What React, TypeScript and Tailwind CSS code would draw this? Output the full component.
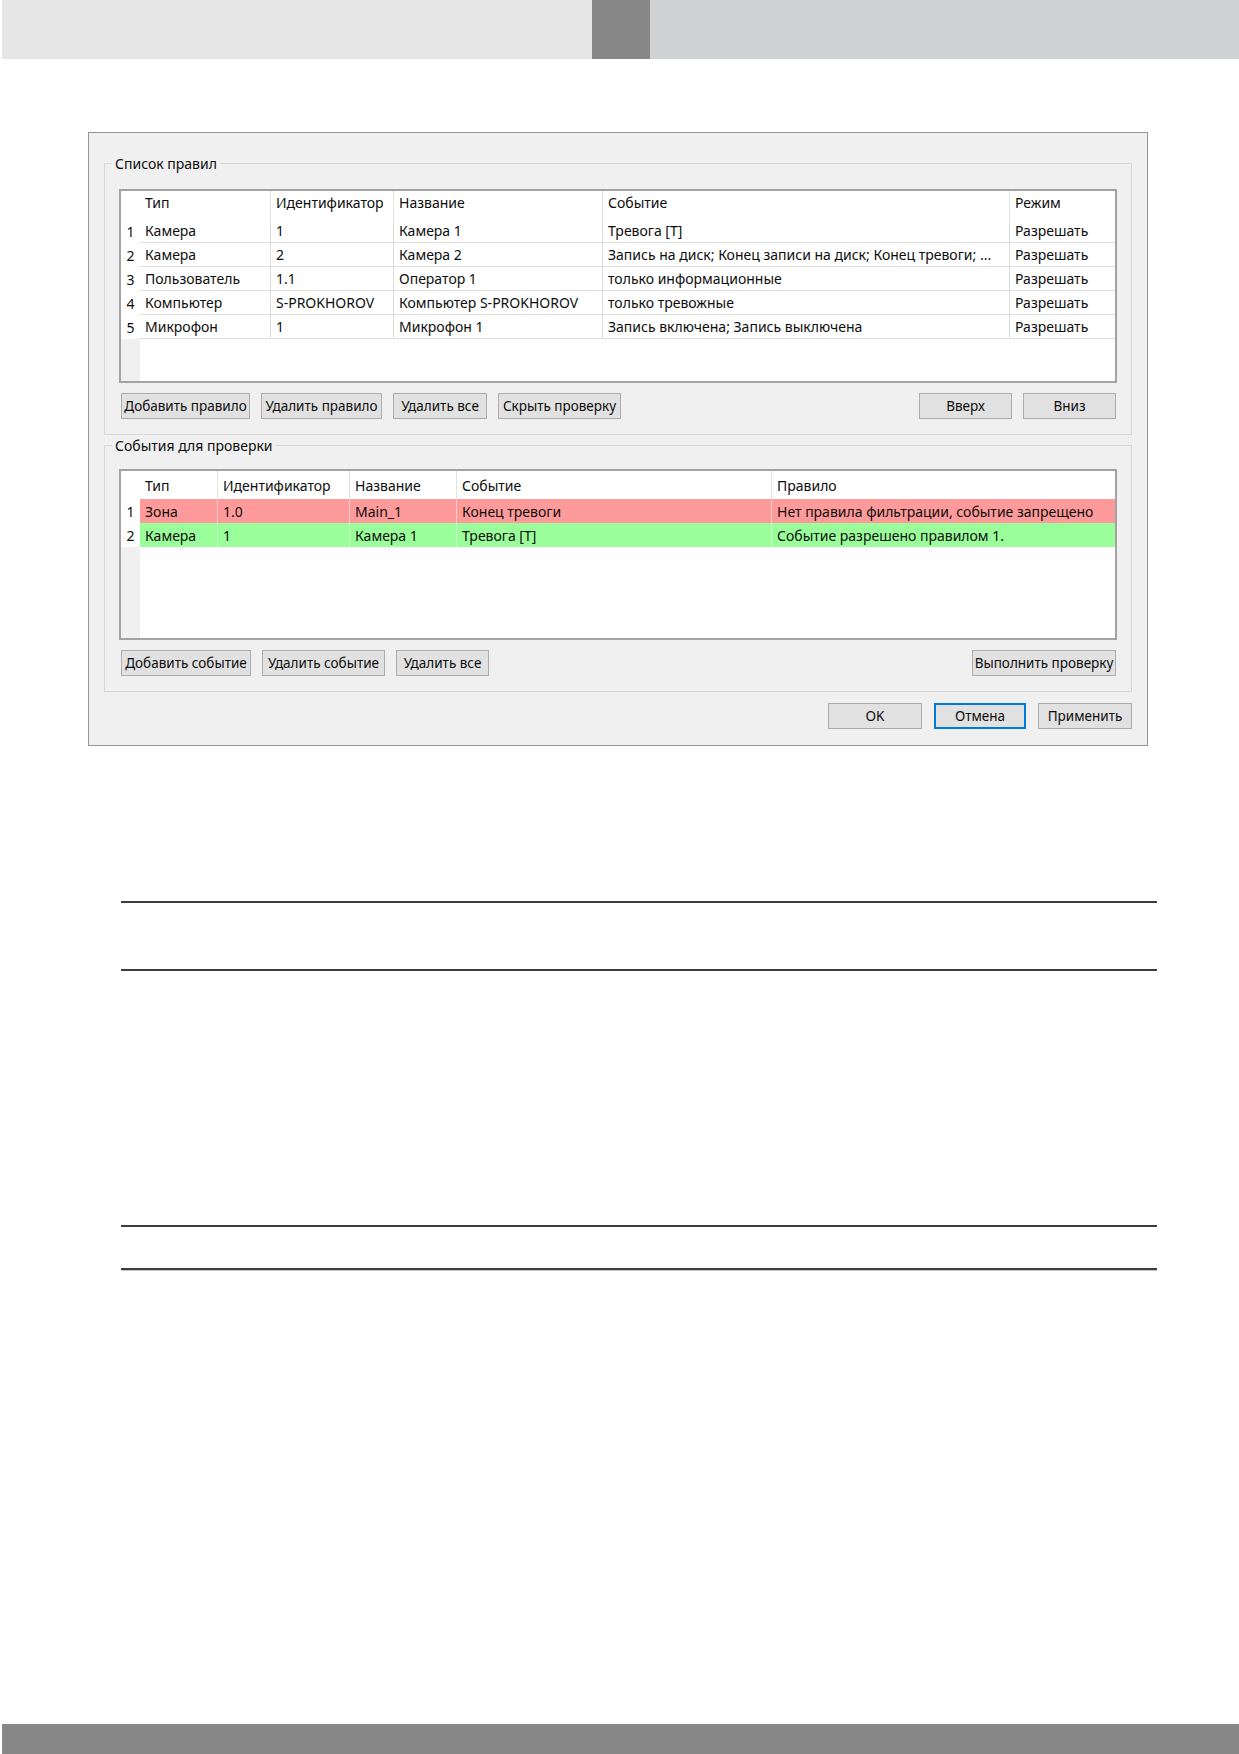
import React from "react";

type Tone = "red" | "green";
type Row = { cells: string[]; tone?: Tone };

// column templates for both grids (row-number column first)
const RULE_COLS = "grid-cols-[19px_130px_123px_209px_407px_1fr]";
const CHECK_COLS = "grid-cols-[19px_77px_132px_107px_315px_1fr]";

const rules: Row[] = [
  { cells: ["Камера", "1", "Камера 1", "Тревога [T]", "Разрешать"] },
  {
    cells: [
      "Камера",
      "2",
      "Камера 2",
      "Запись на диск; Конец записи на диск; Конец тревоги; ...",
      "Разрешать",
    ],
  },
  { cells: ["Пользователь", "1.1", "Оператор 1", "только информационные", "Разрешать"] },
  { cells: ["Компьютер", "S-PROKHOROV", "Компьютер S-PROKHOROV", "только тревожные", "Разрешать"] },
  { cells: ["Микрофон", "1", "Микрофон 1", "Запись включена; Запись выключена", "Разрешать"] },
];

const checks: Row[] = [
  {
    tone: "red",
    cells: ["Зона", "1.0", "Main_1", "Конец тревоги", "Нет правила фильтрации, событие запрещено"],
  },
  {
    tone: "green",
    cells: ["Камера", "1", "Камера 1", "Тревога [T]", "Событие разрешено правилом 1."],
  },
];

function DataGrid({
  cols,
  head,
  rows,
  height,
  headPad = "",
}: {
  cols: string;
  head: string[];
  rows: Row[];
  height: string;
  headPad?: string;
}) {
  return (
    <div className={`flex flex-col border-2 border-[#a3a3a3] bg-white ${height}`}>
      <div className={`grid ${cols} h-[28px] shrink-0`}>
        <div />
        {head.map((h, i) => (
          <div
            key={h}
            className={`flex items-center px-[5px] whitespace-nowrap overflow-hidden ${headPad} ${
              i > 0 ? "border-l border-[#e2e2e2]" : ""
            }`}
          >
            {h}
          </div>
        ))}
      </div>

      {rows.map((r, ri) => {
        const bg =
          r.tone === "red" ? "bg-[#ff9a9a]" : r.tone === "green" ? "bg-[#9aff9a]" : "bg-white";
        const line = r.tone ? "border-white/50" : "border-[#dedede]";
        return (
          <div key={ri} className={`grid ${cols} h-[24px] shrink-0`}>
            <div className="flex items-center justify-center bg-white">{ri + 1}</div>
            {r.cells.map((c, ci) => (
              <div
                key={ci}
                className={`flex items-center px-[5px] whitespace-nowrap overflow-hidden ${bg} ${
                  r.tone ? "" : "border-b border-b-[#dedede]"
                } ${ci > 0 ? `border-l ${line}` : ""}`}
              >
                {c}
              </div>
            ))}
          </div>
        );
      })}

      {/* empty space under the last row */}
      <div className={`grid ${cols} flex-1`}>
        <div className="bg-[#f0f0f0]" />
      </div>
    </div>
  );
}

function Btn({ w, label, focus }: { w: string; label: string; focus?: boolean }) {
  return (
    <button
      className={`flex h-[26px] items-center justify-center whitespace-nowrap bg-[#e1e1e1] text-[13.5px] ${w} ${
        focus ? "border-2 border-[#0078d7]" : "border border-[#adadad]"
      }`}
    >
      {label}
    </button>
  );
}

function Group({ title, className, children }: { title: string; className: string; children: React.ReactNode }) {
  return (
    <fieldset className={`border border-[#d7d7d7] px-[14px] pb-[15px] ${className}`}>
      <legend className="-ml-[7px] px-[3px] text-[14px] leading-[19px]">{title}</legend>
      {children}
    </fieldset>
  );
}

export default function App() {
  return (
    <div className="flex h-[1754px] flex-col overflow-hidden bg-white font-['Noto_Sans',sans-serif] text-[14px] text-[#0d0d0d]">
      {/* page header stripe */}
      <div className="ml-[2px] flex h-[59px] shrink-0">
        <div className="w-[590px] bg-[#e6e6e6]" />
        <div className="w-[58px] bg-[#878787]" />
        <div className="flex-1 bg-[#d1d2d4]" />
      </div>

      {/* filter rules dialog */}
      <div className="ml-[88px] mt-[73px] w-[1060px] border border-[#959595] bg-[#f0f0f0] px-[15px] pt-[21px] pb-[16px]">
        <Group title="Список правил" className="pt-[16px]">
          <DataGrid
            cols={RULE_COLS}
            head={["Тип", "Идентификатор", "Название", "Событие", "Режим"]}
            rows={rules}
            height="h-[194px]"
            headPad="pb-[5px]"
          />
          <div className="mt-[10px] flex items-center pl-[2px] pr-[1px]">
            <div className="flex gap-[11px]">
              <Btn w="w-[129px]" label="Добавить правило" />
              <Btn w="w-[121px]" label="Удалить правило" />
              <Btn w="w-[94px]" label="Удалить все" />
              <Btn w="w-[123px]" label="Скрыть проверку" />
            </div>
            <div className="ml-auto flex gap-[11px]">
              <Btn w="w-[93px]" label="Вверх" />
              <Btn w="w-[93px]" label="Вниз" />
            </div>
          </div>
        </Group>

        <Group title="События для проверки" className="mt-[1px] pt-[14px]">
          <DataGrid
            cols={CHECK_COLS}
            head={["Тип", "Идентификатор", "Название", "Событие", "Правило"]}
            rows={checks}
            height="h-[171px]"
          />
          <div className="mt-[10px] flex items-center pl-[2px] pr-[1px]">
            <div className="flex gap-[11px]">
              <Btn w="w-[130px]" label="Добавить событие" />
              <Btn w="w-[123px]" label="Удалить событие" />
              <Btn w="w-[93px]" label="Удалить все" />
            </div>
            <Btn w="ml-auto w-[144px]" label="Выполнить проверку" />
          </div>
        </Group>

        <div className="mt-[11px] flex justify-end gap-[12px]">
          <Btn w="w-[94px]" label="OK" />
          <Btn w="w-[92px]" label="Отмена" focus />
          <Btn w="w-[94px]" label="Применить" />
        </div>
      </div>

      {/* table rules further down the page */}
      <div className="ml-[121px] mt-[155px] h-[2px] w-[1036px] shrink-0 bg-[#3d3d3d]" />
      <div className="ml-[121px] mt-[66px] h-[2px] w-[1036px] shrink-0 bg-[#3d3d3d]" />
      <div className="ml-[121px] mt-[254px] h-[2px] w-[1036px] shrink-0 bg-[#3d3d3d]" />
      <div className="ml-[121px] mt-[41px] h-[3px] w-[1036px] shrink-0 border-b border-[#c4c4c4] bg-[#3d3d3d]" />

      {/* page footer stripe */}
      <div className="ml-[2px] mt-auto h-[30px] shrink-0 bg-[#878787]" />
    </div>
  );
}
